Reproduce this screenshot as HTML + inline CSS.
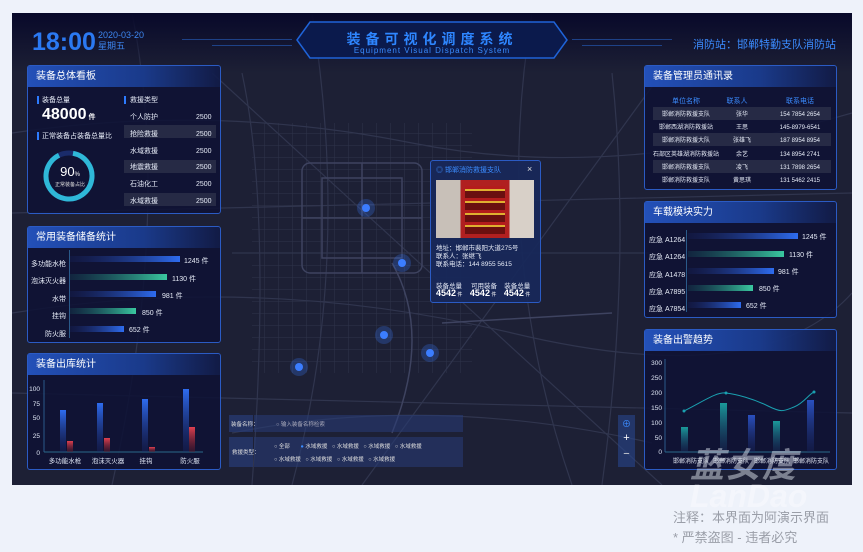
<!DOCTYPE html>
<html><head><meta charset="utf-8"><style>
*{margin:0;padding:0;box-sizing:border-box}
body{width:863px;height:552px;background:#eef2fa;font-family:"Liberation Sans","Noto Sans CJK SC",sans-serif;position:relative;overflow:hidden;color:#dfe6f5}
.a{position:absolute;white-space:nowrap}
#dash{position:absolute;left:12px;top:13px;width:840px;height:472px;background:#1d2035;overflow:hidden}
.panel{position:absolute;border:1px solid #2b5bc4;border-radius:3px;background:rgba(14,18,52,.86)}
.hd{position:absolute;left:0;top:0;right:0;height:21px;background:linear-gradient(90deg,#2350b8,#1a3a8a 60%,rgba(26,58,138,.2));color:#fff;font-size:10px;line-height:21px;padding-left:8px}
.t8{font-size:7px;color:#e6ebf7}
</style></head><body>
<div id="dash">
<svg class="a" style="left:0;top:0" width="840" height="472">
<defs><linearGradient id="top" x1="0" y1="0" x2="0" y2="1"><stop offset="0" stop-color="#08092a"/><stop offset="1" stop-color="#08092a" stop-opacity="0"/></linearGradient>
<pattern id="grid" width="14" height="12" patternUnits="userSpaceOnUse"><path d="M0 0 H14 M0 0 V12" stroke="#34394f" stroke-width="1" fill="none"/></pattern></defs>
<rect x="240" y="110" width="220" height="250" fill="url(#grid)" opacity=".8"/>
<g stroke="#30354e" stroke-width="1.2" fill="none">
<path d="M0 120 Q200 90 400 130 T840 100"/><path d="M0 300 Q250 260 500 320 T840 280"/>
<path d="M120 0 Q160 200 100 472"/><path d="M300 0 Q340 250 280 472"/><path d="M520 0 Q480 240 560 472"/>
<path d="M0 200 L840 180"/><path d="M0 380 L840 400"/><path d="M200 60 L650 472"/><path d="M650 60 L350 472"/>
<path d="M230 60 Q260 200 240 472"/><path d="M600 60 Q620 250 590 472"/><path d="M220 240 H640"/><path d="M220 420 Q420 380 640 430"/>
</g>
<g stroke="#3e4360" stroke-width="1.5" fill="none">
<rect x="290" y="150" width="120" height="110" rx="8"/><rect x="310" y="165" width="80" height="80"/><path d="M290 205 H410 M350 150 V260"/>
<path d="M380 250 Q420 320 380 420"/><path d="M430 310 L600 300"/>
</g>
<rect width="840" height="60" fill="url(#top)"/>
<g fill="#3b7dff"><circle cx="354" cy="195" r="4"/><circle cx="390" cy="250" r="4"/><circle cx="287" cy="354" r="4"/><circle cx="372" cy="322" r="4"/><circle cx="418" cy="340" r="4"/></g>
<g fill="#3b7dff" opacity=".25"><circle cx="354" cy="195" r="9"/><circle cx="390" cy="250" r="9"/><circle cx="287" cy="354" r="9"/><circle cx="372" cy="322" r="9"/><circle cx="418" cy="340" r="9"/></g>
<path d="M285 27 L298 9 L542 9 L555 27 L542 45 L298 45 Z" fill="#0b1a4c" stroke="#1f63d8" stroke-width="1.5"/>
<g fill="#2a6fe0" opacity=".5"><path d="M200 32 h80 v1 h-80z M170 26 h110 v1 h-110z M560 26 h100 v1 h-100z M570 32 h80 v1 h-80z"/></g>
</svg>
<div class="a" style="left:20px;top:15px;font-size:25px;font-weight:bold;color:#2b79f2">18:00</div>
<div class="a" style="left:86px;top:17px;font-size:9px;color:#3d86f0;line-height:11px">2020-03-20<br>星期五</div>
<div class="a" style="left:285px;top:16px;width:270px;text-align:center;font-size:14px;font-weight:bold;color:#2e86ff;letter-spacing:5px">装备可视化调度系统</div>
<div class="a" style="left:285px;top:33px;width:270px;text-align:center;font-size:8px;color:#3a8cff;letter-spacing:1px">Equipment Visual Dispatch System</div>
<div class="a" style="left:681px;top:23px;font-size:11px;color:#3b8cff">消防站：邯郸特勤支队消防站</div>
</div>

<!-- panel 1 -->
<div class="panel" style="left:27px;top:65px;width:194px;height:149px"><div class="hd">装备总体看板</div></div>
<div class="a" style="left:37px;top:96px;width:2px;height:8px;background:#2d7bff"></div>
<div class="a t8" style="left:42px;top:95px">装备总量</div>
<div class="a" style="left:42px;top:106px;font-size:16px;font-weight:bold;color:#fff">48000<span style="font-size:7px"> 件</span></div>
<div class="a" style="left:37px;top:132px;width:2px;height:8px;background:#2d7bff"></div>
<div class="a t8" style="left:42px;top:131px">正常装备占装备总量比</div>
<svg class="a" style="left:43px;top:150px" width="54" height="54"><circle cx="26" cy="26" r="23" fill="none" stroke="#1a2b6a" stroke-width="5"/><circle cx="26" cy="26" r="23" fill="none" stroke="#2fb8d8" stroke-width="5" stroke-dasharray="130 145" transform="rotate(-80 26 26)"/></svg>
<div class="a" style="left:50px;top:164px;width:40px;text-align:center;font-size:13px;color:#fff">90<span style="font-size:6px">%</span></div>
<div class="a" style="left:50px;top:181px;width:40px;text-align:center;font-size:5px;color:#ddd">正常装备占比</div>
<div class="a" style="left:124px;top:96px;width:2px;height:8px;background:#2d7bff"></div>
<div class="a t8" style="left:130px;top:95px">救援类型</div>
<div class="a" style="left:124px;top:125px;width:92px;height:13px;background:#262a45"></div>
<div class="a" style="left:124px;top:160px;width:92px;height:13px;background:#262a45"></div>
<div class="a" style="left:124px;top:193px;width:92px;height:13px;background:#262a45"></div>
<div class="a t8" style="left:130px;top:110px;line-height:16.8px">个人防护<br>抢险救援<br>水域救援<br>地震救援<br>石油化工<br>水域救援</div>
<div class="a t8" style="left:196px;top:110px;line-height:16.8px">2500<br>2500<br>2500<br>2500<br>2500<br>2500</div>

<!-- panel 2 -->
<div class="panel" style="left:27px;top:226px;width:194px;height:117px"><div class="hd">常用装备储备统计</div></div>
<div class="a" style="left:69px;top:250px;width:1px;height:88px;background:#2a5a8a"></div>
<div class="a t8" style="left:30px;top:256px;width:36px;text-align:right;line-height:17.4px">多功能水枪<br>泡沫灭火器<br>水带<br>挂钩<br>防火服</div>
<svg class="a" style="left:70px;top:255px" width="150" height="85">
<defs><linearGradient id="bb"><stop offset="0" stop-color="#1a2a70" stop-opacity=".2"/><stop offset="1" stop-color="#2e6cf0"/></linearGradient><linearGradient id="gb"><stop offset="0" stop-color="#1a6a6a" stop-opacity=".2"/><stop offset="1" stop-color="#3ac8a0"/></linearGradient></defs>
<rect x="0" y="1" width="110" height="6" fill="url(#bb)"/><rect x="0" y="19" width="97" height="6" fill="url(#gb)"/><rect x="0" y="36" width="86" height="6" fill="url(#bb)"/><rect x="0" y="53" width="66" height="6" fill="url(#gb)"/><rect x="0" y="71" width="54" height="6" fill="url(#bb)"/>
</svg>
<div class="a t8" style="left:184px;top:256px">1245 件</div>
<div class="a t8" style="left:172px;top:274px">1130 件</div>
<div class="a t8" style="left:162px;top:291px">981 件</div>
<div class="a t8" style="left:142px;top:308px">850 件</div>
<div class="a t8" style="left:129px;top:325px">652 件</div>

<!-- panel 3 -->
<div class="panel" style="left:27px;top:353px;width:194px;height:117px"><div class="hd">装备出库统计</div></div>
<svg class="a" style="left:27px;top:375px" width="194" height="95">
<defs><linearGradient id="vb" x1="0" y1="0" x2="0" y2="1"><stop offset="0" stop-color="#2e6cf0"/><stop offset="1" stop-color="#1a2a70" stop-opacity=".3"/></linearGradient><linearGradient id="vr" x1="0" y1="0" x2="0" y2="1"><stop offset="0" stop-color="#e04050"/><stop offset="1" stop-color="#601828" stop-opacity=".4"/></linearGradient></defs>
<g font-size="6.5" fill="#dfe6f5" text-anchor="end"><text x="13" y="16">100</text><text x="13" y="31">75</text><text x="13" y="45">50</text><text x="13" y="63">25</text><text x="13" y="80">0</text></g>
<line x1="17" y1="5" x2="17" y2="77" stroke="#2a5a8a"/><line x1="17" y1="77" x2="176" y2="77" stroke="#2a6a8a"/>
<rect x="33" y="35" width="6" height="42" fill="url(#vb)"/><rect x="40" y="66" width="6" height="11" fill="url(#vr)"/>
<rect x="70" y="28" width="6" height="49" fill="url(#vb)"/><rect x="77" y="63" width="6" height="14" fill="url(#vr)"/>
<rect x="115" y="24" width="6" height="53" fill="url(#vb)"/><rect x="122" y="72" width="6" height="5" fill="url(#vr)"/>
<rect x="156" y="14" width="6" height="63" fill="url(#vb)"/><rect x="162" y="52" width="6" height="25" fill="url(#vr)"/>
<g font-size="6.5" fill="#dfe6f5" text-anchor="middle"><text x="38" y="88">多功能水枪</text><text x="81" y="88">泡沫灭火器</text><text x="119" y="88">挂钩</text><text x="163" y="88">防火服</text></g>
</svg>

<!-- popup -->
<div class="panel" style="left:430px;top:160px;width:111px;height:143px;background:rgba(24,40,90,.92)"></div>
<div class="a" style="left:436px;top:165px;font-size:7px;color:#3b8cff">◎ 邯郸消防救援支队</div>
<div class="a" style="left:527px;top:164px;font-size:9px;color:#ddd">×</div>
<div class="a" style="left:436px;top:180px;width:98px;height:58px;background:linear-gradient(90deg,#c8c0b8 0 25%,#b02020 25% 75%,#d8d0c8 75%)"></div>
<div class="a" style="left:465px;top:186px;width:40px;height:48px;background:repeating-linear-gradient(#b41c1c 0 3px,#e0b030 3px 5px,#6a1010 5px 12px)"></div>
<div class="a" style="left:436px;top:245px;font-size:6.5px;line-height:8px;color:#e6ebf7">地址：邯郸市裴阳大道275号<br>联系人：张继飞<br>联系电话：144 8955 5615</div>
<div class="a" style="left:436px;top:280px;font-size:6.5px;color:#e6ebf7">装备总量&nbsp;&nbsp;&nbsp;&nbsp;&nbsp;可用装备&nbsp;&nbsp;&nbsp;&nbsp;装备总量</div>
<div class="a" style="left:436px;top:288px;font-size:9px;font-weight:bold;color:#fff">4542<span style="font-size:5px;font-weight:normal"> 件</span>&nbsp;&nbsp;&nbsp;4542<span style="font-size:5px;font-weight:normal"> 件</span>&nbsp;&nbsp;&nbsp;4542<span style="font-size:5px;font-weight:normal"> 件</span></div>

<!-- search -->
<div class="a" style="left:229px;top:415px;width:24px;height:17px;background:rgba(40,60,120,.7)"></div>
<div class="a" style="left:254px;top:415px;width:209px;height:17px;background:rgba(40,60,120,.55)"></div>
<div class="a" style="left:229px;top:437px;width:24px;height:30px;background:rgba(40,60,120,.7)"></div>
<div class="a" style="left:254px;top:437px;width:209px;height:30px;background:rgba(40,60,120,.55)"></div>
<div class="a" style="left:231px;top:420px;font-size:5.5px;color:#ddd">装备名称：</div>
<div class="a" style="left:276px;top:420px;font-size:5.5px;color:#aab">○ 输入装备名称检索</div>
<div class="a" style="left:232px;top:448px;font-size:5.5px;color:#ddd">救援类型：</div>
<div class="a" style="left:274px;top:442px;font-size:5.5px;color:#ddd">○ 全部 &nbsp;&nbsp;&nbsp;&nbsp;&nbsp;&nbsp;<span style="color:#3b8cff">●</span> 水域救援 &nbsp;&nbsp;○ 水域救援 &nbsp;&nbsp;○ 水域救援 &nbsp;&nbsp;○ 水域救援</div>
<div class="a" style="left:274px;top:455px;font-size:5.5px;color:#ddd">○ 水域救援 &nbsp;&nbsp;○ 水域救援 &nbsp;&nbsp;○ 水域救援 &nbsp;&nbsp;○ 水域救援</div>
<div class="a" style="left:618px;top:415px;width:17px;height:52px;background:rgba(40,70,140,.6)"></div>
<div class="a" style="left:618px;top:417px;width:17px;text-align:center;font-size:9px;color:#3b8cff">⊕</div>
<div class="a" style="left:618px;top:432px;width:17px;text-align:center;font-size:11px;color:#fff">+</div>
<div class="a" style="left:618px;top:448px;width:17px;text-align:center;font-size:11px;color:#ddd">−</div>

<!-- right 1 -->
<div class="panel" style="left:644px;top:65px;width:193px;height:125px"><div class="hd">装备管理员通讯录</div></div>
<div class="a" style="left:653px;top:107px;width:178px;height:13px;background:#262a45"></div>
<div class="a" style="left:653px;top:133px;width:178px;height:13px;background:#262a45"></div>
<div class="a" style="left:653px;top:160px;width:178px;height:13px;background:#262a45"></div>
<div class="a" style="left:650px;top:96px;width:72px;text-align:center;font-size:7px;color:#3b8cff">单位名称</div>
<div class="a" style="left:722px;top:96px;width:30px;text-align:center;font-size:7px;color:#3b8cff">联系人</div>
<div class="a" style="left:770px;top:96px;width:60px;text-align:center;font-size:7px;color:#3b8cff">联系电话</div>
<div class="a" style="left:650px;top:109px;width:72px;text-align:center;font-size:6px;line-height:13.2px;color:#e6ebf7">邯郸消防救援支队<br>邯郸西湖消防救援站<br>邯郸消防救援大队<br>石部区英雄湖消防救援站<br>邯郸消防救援支队<br>邯郸消防救援支队</div>
<div class="a" style="left:722px;top:109px;width:40px;text-align:center;font-size:6px;line-height:13.2px;color:#e6ebf7">张华<br>王思<br>张雄飞<br>余艺<br>凌飞<br>黄思琪</div>
<div class="a" style="left:770px;top:109px;width:60px;text-align:center;font-size:6px;line-height:13.2px;color:#e6ebf7">154 7854 2654<br>145-8979-6541<br>187 8954 8954<br>134 8954 2741<br>131 7898 2654<br>131 5462 2415</div>

<!-- right 2 -->
<div class="panel" style="left:644px;top:201px;width:193px;height:117px"><div class="hd">车载模块实力</div></div>
<div class="a" style="left:686px;top:230px;width:1px;height:82px;background:#2a5a8a"></div>
<div class="a t8" style="left:649px;top:232px;line-height:17.3px">应急 A1264<br>应急 A1264<br>应急 A1478<br>应急 A7895<br>应急 A7854</div>
<svg class="a" style="left:688px;top:233px" width="150" height="80">
<rect x="0" y="0" width="110" height="6" fill="url(#bb)"/><rect x="0" y="18" width="96" height="6" fill="url(#gb)"/><rect x="0" y="35" width="86" height="6" fill="url(#bb)"/><rect x="0" y="52" width="65" height="6" fill="url(#gb)"/><rect x="0" y="69" width="53" height="6" fill="url(#bb)"/>
</svg>
<div class="a t8" style="left:802px;top:232px">1245 件</div>
<div class="a t8" style="left:789px;top:250px">1130 件</div>
<div class="a t8" style="left:778px;top:267px">981 件</div>
<div class="a t8" style="left:759px;top:284px">850 件</div>
<div class="a t8" style="left:746px;top:301px">652 件</div>

<!-- right 3 -->
<div class="panel" style="left:644px;top:329px;width:193px;height:141px"><div class="hd">装备出警趋势</div></div>
<svg class="a" style="left:644px;top:329px" width="193" height="141">
<defs><linearGradient id="tb" x1="0" y1="0" x2="0" y2="1"><stop offset="0" stop-color="#1a9a9a"/><stop offset="1" stop-color="#1a3a6a" stop-opacity=".3"/></linearGradient><linearGradient id="tb2" x1="0" y1="0" x2="0" y2="1"><stop offset="0" stop-color="#2a50c0"/><stop offset="1" stop-color="#1a2a6a" stop-opacity=".3"/></linearGradient></defs>
<g font-size="6.5" fill="#dfe6f5" text-anchor="end"><text x="18" y="36">300</text><text x="18" y="51">250</text><text x="18" y="66">200</text><text x="18" y="81">150</text><text x="18" y="96">100</text><text x="18" y="111">50</text><text x="18" y="125">0</text></g>
<line x1="21" y1="30" x2="21" y2="123" stroke="#2a5a8a"/><line x1="21" y1="123" x2="186" y2="123" stroke="#2a6a8a"/>
<rect x="37" y="98" width="7" height="25" fill="url(#tb)"/><rect x="76" y="74" width="7" height="49" fill="url(#tb)"/><rect x="104" y="86" width="7" height="37" fill="url(#tb2)"/><rect x="129" y="92" width="7" height="31" fill="url(#tb)"/><rect x="163" y="71" width="7" height="52" fill="url(#tb2)"/>
<path d="M40 82 C60 72,72 63,82 64 S110 70,124 77 S140 82,150 78 S165 65,170 63" fill="none" stroke="#1aa0b0" stroke-width="1"/>
<g fill="#1aa0b0"><circle cx="40" cy="82" r="1.5"/><circle cx="82" cy="64" r="1.5"/><circle cx="170" cy="63" r="1.5"/></g>
<g font-size="6" fill="#e6ebf7" text-anchor="middle"><text x="47" y="134">邯郸消防支队</text><text x="87" y="134">邯郸消防支队</text><text x="128" y="134">邯郸消防支队</text><text x="167" y="134">邯郸消防支队</text></g>
</svg>
<div class="a" style="left:690px;top:438px;font-size:34px;font-weight:bold;font-style:italic;color:rgba(220,225,235,.5);letter-spacing:2px">蓝女度</div>
<div class="a" style="left:690px;top:478px;font-size:32px;font-weight:bold;font-style:italic;color:rgba(255,255,255,.35)">LanDao</div>

<div class="a" style="left:673px;top:507px;font-size:13px;color:#9a9ea8">注释：本界面为阿演示界面</div>
<div class="a" style="left:673px;top:527px;font-size:13px;color:#9a9ea8">* 严禁盗图 - 违者必究</div>
</body></html>
